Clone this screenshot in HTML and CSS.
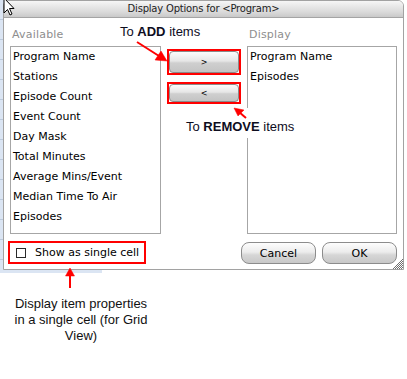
FILE: index.html
```html
<!DOCTYPE html>
<html lang="en">
<head>
    <meta charset="UTF-8">
    <title>Display Options</title>
    <link rel="stylesheet" href="styles.css">
</head>
<body>
    <div class="sheet">
        <div class="dialog">
            <div class="titlebar">Display Options for &lt;Program&gt;</div>
            <div class="dialog-body">
                <div class="lists">
                    <div class="col col-left">
                        <div class="label">Available</div>
                        <ul class="listbox">
                            <li>Program Name</li>
                            <li>Stations</li>
                            <li>Episode Count</li>
                            <li>Event Count</li>
                            <li>Day Mask</li>
                            <li>Total Minutes</li>
                            <li>Average Mins/Event</li>
                            <li>Median Time To Air</li>
                            <li>Episodes</li>
                        </ul>
                    </div>
                    <div class="moves">
                        <div class="hl hl-add"><button class="move">&gt;</button></div>
                        <div class="hl hl-remove"><button class="move">&lt;</button></div>
                    </div>
                    <div class="col col-right">
                        <div class="label">Display</div>
                        <ul class="listbox">
                            <li>Program Name</li>
                            <li>Episodes</li>
                        </ul>
                    </div>
                </div>
                <div class="footer">
                    <label class="hl single"><span class="checkbox"></span>Show as single cell</label>
                    <div class="actions">
                        <button class="pill">Cancel</button>
                        <button class="pill">OK</button>
                    </div>
                </div>
            </div>
            <div class="grip"></div>
        </div>
    </div>

    <p class="caption">Display item properties<br>in a single cell (for Grid<br>View)</p>

    <!-- annotations laid over the dialog -->
    <div class="note note-add">To <b>ADD</b> items</div>
    <div class="note note-remove">To <b>REMOVE</b> items</div>

    <svg class="arrows" width="407" height="379" viewBox="0 0 407 379">
        <g fill="#ff0000" stroke="#ff0000">
            <line x1="137" y1="42" x2="159" y2="56" stroke-width="2"/>
            <polygon points="167,61 155,60 161,51" stroke-width="0.5"/>
            <line x1="246" y1="118" x2="239" y2="112" stroke-width="2"/>
            <polygon points="234,108 244,110 238,116" stroke-width="0.5"/>
            <line x1="70" y1="288" x2="70" y2="275" stroke-width="2"/>
            <polygon points="70,268 74.5,276 65.5,276" stroke-width="0.5"/>
        </g>
    </svg>

    <svg class="cursor" width="14" height="18" viewBox="0 0 14 18">
        <path d="M1 -2 L1 13 L4.5 9.5 L7 15 L9 14 L6.5 8.5 L11 8.5 Z" fill="#fff" stroke="#000" stroke-width="1"/>
    </svg>
</body>
</html>
```

FILE: styles.css
```css
* {
    box-sizing: border-box;
}
body {
    margin: 0;
    width: 407px;
    height: 379px;
    position: relative;
    overflow: hidden;
    background: #fff;
    font-family: "DejaVu Sans", Verdana, sans-serif;
    font-size: 11px;
    color: #000;
}
/* spreadsheet peeking out behind the dialog */
.sheet {
    padding: 0 3px 3px 3px;
    background:
        repeating-linear-gradient(180deg, transparent 0 19px, #bccadc 19px 20px) 0 0 / 102px 100% no-repeat,
        linear-gradient(90deg, #dbe5f3 0 102px, #fff 102px);
}
.dialog {
    position: relative;
    background: #fff;
    border: 1px solid #a2a2a2;
    border-radius: 6px 6px 0 0;
    overflow: hidden;
}
.titlebar {
    height: 17px;
    line-height: 16px;
    text-align: center;
    font-size: 10px;
    letter-spacing: -0.2px;
    color: #222;
    background: linear-gradient(#f6f6f6, #d9d9d9 70%, #c9c9c9);
    border-bottom: 1px solid #a4a4a4;
}
.dialog-body {
    padding: 10px 6px 5px 6px;
}
.lists {
    display: flex;
    gap: 6px;
}
.col-left {
    width: 151px;
}
.col-right {
    width: 150px;
}
.label {
    height: 14px;
    line-height: 14px;
    margin-bottom: 4px;
    padding-left: 2px;
    color: #8e8e8e;
    letter-spacing: 0.2px;
}
.listbox {
    list-style: none;
    margin: 0;
    padding: 0 0 0 2px;
    height: 188px;
    border: 1px solid #a6a6a6;
}
.listbox li {
    height: 20px;
    line-height: 19px;
}
.moves {
    width: 74px;
    padding-top: 21px;
    display: flex;
    flex-direction: column;
    gap: 7px;
}
.hl {
    border: 2px solid #ff0000;
}
.hl-add {
    height: 26px;
}
.hl-remove {
    height: 22px;
}
.move {
    display: block;
    width: 100%;
    height: 100%;
    margin: 0;
    padding: 0;
    font-family: "DejaVu Sans", sans-serif;
    font-size: 8px;
    color: #000;
    border: 1px solid #8a8a8a;
    border-radius: 4px;
    background: linear-gradient(#fbfbfb, #e6e6e6 45%, #cfcfcf 55%, #c4c4c4);
}
.footer {
    margin-top: 7px;
    display: flex;
    justify-content: space-between;
    align-items: flex-end;
}
.single {
    margin-left: -2px;
    width: 138px;
    height: 23px;
    display: flex;
    align-items: center;
    padding-left: 6px;
    font-size: 11px;
}
.checkbox {
    width: 10px;
    height: 10px;
    margin-right: 9px;
    border: 1px solid #2a2a2a;
    background: #fff;
}
.actions {
    display: flex;
    gap: 6px;
}
.pill {
    width: 75px;
    height: 22px;
    margin: 0;
    padding: 0;
    font-family: "DejaVu Sans", sans-serif;
    font-size: 11px;
    color: #000;
    border: 1px solid #8c8c8c;
    border-radius: 8px;
    background: linear-gradient(#fdfdfd, #ececec 45%, #d6d6d6 60%, #c8c8c8);
}
.grip {
    position: absolute;
    right: 0;
    bottom: 0;
    width: 11px;
    height: 11px;
    background: repeating-conic-gradient(#6f6f6f 0 25%, transparent 0 50%) 0 0 / 2px 2px;
    clip-path: polygon(100% 0, 100% 100%, 0 100%);
}
.caption {
    margin: 23px 0 0 6px;
    width: 150px;
    text-align: center;
    font-family: "Liberation Sans", Arial, sans-serif;
    font-size: 13px;
    line-height: 16px;
    color: #111;
}
/* annotation layer */
.note {
    position: absolute;
    font-family: "Liberation Sans", Arial, sans-serif;
    font-size: 13px;
    line-height: 15px;
    color: #0d0d1e;
    white-space: nowrap;
}
.note-add {
    left: 120px;
    top: 24px;
}
.note-remove {
    left: 183px;
    top: 108px;
    padding: 11px 3px 4px 3px;
    background: #fff;
}
.arrows {
    position: absolute;
    left: 0;
    top: 0;
    pointer-events: none;
}
.cursor {
    position: absolute;
    left: 3px;
    top: 0;
}
```
